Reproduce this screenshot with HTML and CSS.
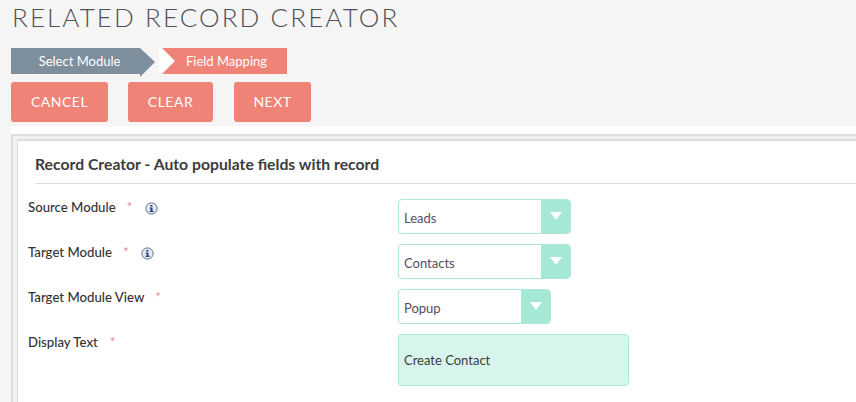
FILE: index.html
```html
<!DOCTYPE html>
<html>
<head>
    <meta charset="UTF-8">
    <title>Related Record Creator</title>
    <link rel="stylesheet" href="styles.css">
</head>
<body>
    <h1 class="page-title">RELATED RECORD CREATOR</h1>
    <div class="steps">
        <div class="step step-done">Select Module</div>
        <div class="step step-current">Field Mapping</div>
    </div>
    <div class="actions">
        <button class="button button-cancel">CANCEL</button>
        <button class="button button-clear">CLEAR</button>
        <button class="button button-next">NEXT</button>
    </div>
    <div class="strip"></div>
    <div class="outer">
        <div class="panel">
            <h2 class="panel-title">Record Creator - Auto populate fields with record</h2>
            <div class="row">
                <div class="field-label">Source Module<span class="required req-source">*</span>
                    <svg class="info" width="13" height="13" viewBox="0 0 13 13"><circle cx="6.5" cy="6.500" r="5.600" fill="#e4e9f2" stroke="#5f6f8c"/><path d="M5.200 3h2.200v1.600H5.200zM4.800 5.600h2.700v3.200h1v1.100H4.600V8.800h1V6.700h-.8z" fill="#26408b"/></svg>
                </div>
                <div class="select select-wide"><span class="select-text">Leads</span><span class="select-arrow"></span></div>
            </div>
            <div class="row">
                <div class="field-label">Target Module<span class="required req-target">*</span>
                    <svg class="info" width="13" height="13" viewBox="0 0 13 13"><circle cx="6.5" cy="6.500" r="5.600" fill="#e4e9f2" stroke="#5f6f8c"/><path d="M5.200 3h2.200v1.600H5.200zM4.800 5.600h2.700v3.200h1v1.100H4.600V8.800h1V6.700h-.8z" fill="#26408b"/></svg>
                </div>
                <div class="select select-wide"><span class="select-text">Contacts</span><span class="select-arrow"></span></div>
            </div>
            <div class="row">
                <div class="field-label">Target Module View<span class="required req-view">*</span></div>
                <div class="select select-narrow"><span class="select-text">Popup</span><span class="select-arrow"></span></div>
            </div>
            <div class="row">
                <div class="field-label">Display Text<span class="required req-display">*</span></div>
                <div class="text-input">Create Contact</div>
            </div>
        </div>
    </div>
</body>
</html>
```

FILE: styles.css
```css
html, body {
    height: 100%;
}
body {
    margin: 0;
    background: #f5f5f5;
    font-family: "Lato", "Liberation Sans", sans-serif;
    color: #333;
    overflow: hidden;
}
.page-title {
    margin: 0;
    padding: 2px 0 0 12px;
    height: 48px;
    box-sizing: border-box;
    font-size: 26px;
    line-height: 30px;
    font-weight: 300;
    letter-spacing: 2.1px;
    color: #4f5058;
}
.steps {
    display: flex;
    margin-left: 11px;
    height: 26px;
}
.step {
    height: 26px;
    line-height: 26px;
    font-size: 13px;
    color: #fff;
    text-align: center;
    position: relative;
}
.step-done {
    width: 129px;
    padding-left: 8px;
    box-sizing: border-box;
    background: #7d8e9d;
}
.step-done::after {
    content: "";
    position: absolute;
    left: 129px;
    top: 0;
    width: 15px;
    height: 29px;
    background: #7d8e9d;
    clip-path: polygon(0 0, 100% 48%, 0 100%);
}
.step-current {
    margin-left: 22px;
    width: 125px;
    background: #f08377;
    padding-left: 4px;
    box-sizing: border-box;
    box-shadow: -3px 0 0 #fff;
}
.step-current::before {
    content: "";
    position: absolute;
    left: 0;
    top: 0;
    border-left: 13px solid #fff;
    border-top: 13px solid transparent;
    border-bottom: 13px solid transparent;
}
.actions {
    display: flex;
    margin: 8px 0 0 11px;
}
.button {
    height: 40px;
    padding: 0 0 2px 0;
    border: none;
    border-radius: 3px;
    background: #f08377;
    color: #fff;
    font-family: inherit;
    font-size: 14px;
    letter-spacing: .5px;
}
.button-cancel {
    width: 97px;
}
.button-clear {
    width: 85px;
    margin-left: 20px;
}
.button-next {
    width: 77px;
    margin-left: 21px;
}
.strip {
    margin: 4px 0 0 11px;
    height: 8px;
    background: #fff;
}
.outer {
    margin-left: 11px;
    padding: 3px 0 0 4px;
    background: #f1f1f1;
    border-top: 2px solid #ddd;
    border-left: 2px solid #ddd;
}
.panel {
    height: 262px;
    background: #fff;
    border-top: 2px solid #ddd;
    border-left: 1px solid #ddd;
    padding-left: 10px;
}
.panel-title {
    margin: 0 0 0 7px;
    height: 43px;
    box-sizing: border-box;
    padding-top: 13px;
    font-size: 15.75px;
    line-height: 20px;
    font-weight: 700;
    color: #3c3c3c;
    border-bottom: 1px solid #ddd;
}
.row {
    display: flex;
    height: 45px;
    padding-top: 15px;
    box-sizing: border-box;
}
.field-label {
    width: 370px;
    font-size: 13.2px;
    line-height: 17px;
    font-weight: 500;
    color: #333;
    white-space: nowrap;
}
.required {
    color: #e58f96;
}
.req-source {
    margin-left: 11px;
}
.req-target {
    margin-left: 11px;
}
.req-view {
    margin-left: 11px;
}
.req-display {
    margin-left: 12px;
}
.info {
    margin-left: 9px;
    vertical-align: -3px;
}
.select {
    display: flex;
    height: 35px;
    box-sizing: border-box;
    border: 1px solid #aee6d6;
    border-radius: 4px;
    background: #fff;
    overflow: hidden;
}
.select-wide {
    width: 173px;
}
.select-narrow {
    width: 153px;
}
.select-text {
    flex: 1;
    padding-left: 5px;
    font-size: 13px;
    line-height: 36px;
    color: #534d64;
}
.select-arrow {
    width: 29px;
    background: #a5e8d6;
    position: relative;
}
.select-arrow::after {
    content: "";
    position: absolute;
    left: 9px;
    top: 12px;
    border-top: 8px solid #fff;
    border-left: 6px solid transparent;
    border-right: 6px solid transparent;
}
.text-input {
    width: 231px;
    height: 52px;
    box-sizing: border-box;
    border: 1px solid #aee6d6;
    border-radius: 4px;
    background: #d8f5ec;
    padding-left: 5px;
    font-size: 13px;
    line-height: 50px;
    color: #3c3c3c;
}
```
